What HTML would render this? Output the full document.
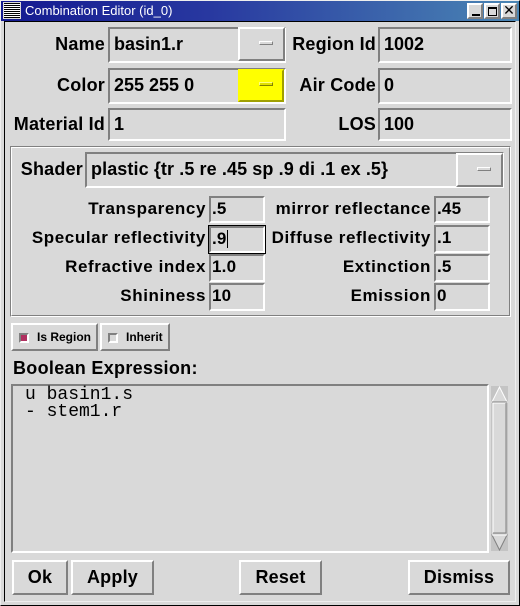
<!DOCTYPE html>
<html><head><style>
*{margin:0;padding:0;box-sizing:border-box}
body{width:520px;height:606px;background:#d9d9d9;position:relative;overflow:hidden;font-family:"Liberation Sans",sans-serif;font-weight:bold;color:#000}
.a{position:absolute}
.sunk{position:absolute;border:2px solid;border-color:#808080 #fff #fff #808080;background:#d9d9d9}
.rais{position:absolute;border:2px solid;border-color:#fff #808080 #808080 #fff;background:#d9d9d9}
.lbl{position:absolute;font-size:18px;text-align:right;white-space:nowrap;line-height:20px;letter-spacing:0.2px}
.val{position:absolute;font-size:18px;line-height:20px;white-space:nowrap;letter-spacing:0px}
.pl{position:absolute;font-size:17px;text-align:right;white-space:nowrap;line-height:20px;letter-spacing:0.6px}
.pv{position:absolute;font-size:17px;line-height:20px;letter-spacing:0.2px}
.ind{position:absolute;width:14px;height:4px;border:1px solid;border-color:#fff #808080 #808080 #fff;background:#d9d9d9}
.btn{position:absolute;border:2px solid;border-color:#fff #808080 #808080 #fff;font-size:18px;text-align:center;line-height:30px;background:#d9d9d9;letter-spacing:0.2px}
</style></head><body>
<div class="a" style="left:0;top:0;width:520px;height:606px;border:1px solid #000;border-color:#eee #000 #000 #eee"></div>
<div class="a" style="left:4px;top:21px;width:512px;height:581px;border:1px solid;border-color:#000 #eee #eee #000"></div>
<div class="a" style="left:1px;top:1px;width:518px;height:20px;background:linear-gradient(90deg,#141a90,#2838a0 40%,#4a86b4)"></div>
<div class="a" style="left:3px;top:2px;width:18px;height:17px;background:repeating-linear-gradient(#000 0 1px,#fff 1px 2px);border:1px solid #d9d9d9"></div>
<div class="a" style="left:25px;top:3px;color:#fff;font-weight:normal;font-size:13px;line-height:15px">Combination Editor (id_0)</div>
<div class="rais" style="left:467px;top:3px;width:16px;height:16px"><div class="a" style="left:3px;top:9px;width:8px;height:2px;background:#000"></div></div>
<div class="rais" style="left:484px;top:3px;width:16px;height:16px"><div class="a" style="left:2px;top:2px;width:9px;height:9px;border:1px solid #000;border-top-width:2px"></div></div>
<div class="rais" style="left:501px;top:3px;width:16px;height:16px;font-size:14px;font-weight:normal;line-height:11px;text-align:center">✕</div>

<div class="lbl" style="left:10px;top:34px;width:95px">Name</div>
<div class="sunk" style="left:108px;top:27px;width:178px;height:36px"></div>
<div class="val" style="left:114px;top:34px">basin1.r</div>
<div class="rais" style="left:238px;top:27px;width:47px;height:34px"><div class="ind" style="left:19px;top:12px"></div></div>
<div class="lbl" style="left:280px;top:34px;width:96px">Region Id</div>
<div class="sunk" style="left:378px;top:27px;width:134px;height:36px"></div>
<div class="val" style="left:384px;top:34px">1002</div>

<div class="lbl" style="left:10px;top:75px;width:95px">Color</div>
<div class="sunk" style="left:108px;top:68px;width:178px;height:36px"></div>
<div class="val" style="left:114px;top:75px">255 255 0</div>
<div class="a" style="left:238px;top:69px;width:46px;height:33px;background:#ffff00;border:2px solid;border-color:#ffff00 #a0a000 #a0a000 #ffff00"><div class="ind" style="left:19px;top:11px;background:#e0e000;border-color:#ffff80 #808000 #808000 #ffff80"></div></div>
<div class="lbl" style="left:280px;top:75px;width:96px">Air Code</div>
<div class="sunk" style="left:378px;top:68px;width:134px;height:36px"></div>
<div class="val" style="left:384px;top:75px">0</div>

<div class="lbl" style="left:5px;top:114px;width:100px">Material Id</div>
<div class="sunk" style="left:108px;top:108px;width:178px;height:33px"></div>
<div class="val" style="left:114px;top:114px">1</div>
<div class="lbl" style="left:280px;top:114px;width:96px">LOS</div>
<div class="sunk" style="left:378px;top:108px;width:134px;height:33px"></div>
<div class="val" style="left:384px;top:114px">100</div>

<div class="a" style="left:10px;top:146px;width:501px;height:171px;border:1px solid;border-color:#808080 #fff #fff #808080"></div>
<div class="a" style="left:11px;top:147px;width:499px;height:169px;border:1px solid;border-color:#fff #808080 #808080 #fff"></div>
<div class="lbl" style="left:12px;top:159px;width:71px">Shader</div>
<div class="sunk" style="left:85px;top:152px;width:419px;height:36px"></div>
<div class="val" style="left:91px;top:159px;letter-spacing:0.1px">plastic {tr .5 re .45 sp .9 di .1 ex .5}</div>
<div class="rais" style="left:456px;top:153px;width:47px;height:34px"><div class="ind" style="left:19px;top:12px"></div></div>

<div class="pl" style="left:10px;top:199px;width:196px">Transparency</div>
<div class="sunk" style="left:209px;top:196px;width:56px;height:27px"></div><div class="pv" style="left:212px;top:199px">.5</div>
<div class="pl" style="left:10px;top:228px;width:196px">Specular reflectivity</div>
<div class="a" style="left:208px;top:225px;width:58px;height:29px;border:1px solid #000"></div><div class="sunk" style="left:209px;top:226px;width:56px;height:27px"></div><div class="pv" style="left:212px;top:229px">.9</div><div class="a" style="left:227px;top:230px;width:1px;height:18px;background:#000"></div>
<div class="pl" style="left:10px;top:257px;width:196px">Refractive index</div>
<div class="sunk" style="left:209px;top:254px;width:56px;height:28px"></div><div class="pv" style="left:212px;top:257px">1.0</div>
<div class="pl" style="left:10px;top:286px;width:196px">Shininess</div>
<div class="sunk" style="left:209px;top:283px;width:56px;height:28px"></div><div class="pv" style="left:212px;top:286px">10</div>

<div class="pl" style="left:250px;top:199px;width:181px">mirror reflectance</div>
<div class="sunk" style="left:434px;top:196px;width:56px;height:27px"></div><div class="pv" style="left:437px;top:199px">.45</div>
<div class="pl" style="left:250px;top:228px;width:181px">Diffuse reflectivity</div>
<div class="sunk" style="left:434px;top:225px;width:56px;height:28px"></div><div class="pv" style="left:437px;top:228px">.1</div>
<div class="pl" style="left:250px;top:257px;width:181px">Extinction</div>
<div class="sunk" style="left:434px;top:254px;width:56px;height:28px"></div><div class="pv" style="left:437px;top:257px">.5</div>
<div class="pl" style="left:250px;top:286px;width:181px">Emission</div>
<div class="sunk" style="left:434px;top:283px;width:56px;height:28px"></div><div class="pv" style="left:437px;top:286px">0</div>

<div class="rais" style="left:11px;top:323px;width:87px;height:28px"><div class="a" style="left:6px;top:8px;width:10px;height:10px;background:#b03060;border:2px solid;border-color:#808080 #fff #fff #808080"></div><div class="a" style="left:24px;top:4px;font-size:12px;line-height:16px">Is Region</div></div>
<div class="rais" style="left:100px;top:323px;width:70px;height:28px"><div class="a" style="left:6px;top:8px;width:10px;height:10px;background:#d9d9d9;border:2px solid;border-color:#808080 #fff #fff #808080"></div><div class="a" style="left:24px;top:4px;font-size:12px;line-height:16px">Inherit</div></div>

<div class="a" style="left:13px;top:358px;font-size:18px;line-height:20px;letter-spacing:0.3px">Boolean Expression:</div>
<div class="sunk" style="left:11px;top:384px;width:478px;height:169px"></div>
<div class="a" style="left:25px;top:387px;font-family:'Liberation Mono',monospace;font-weight:normal;font-size:18px;line-height:17px;white-space:pre">u basin1.s
- stem1.r</div>
<div class="a" style="left:491px;top:386px;width:17px;height:165px;background:#c4c4c4"></div>
<svg class="a" style="left:491px;top:386px" width="17" height="165">
<polygon points="8.5,1 16,16 1,16" fill="#d9d9d9" stroke="#fff"/>
<polyline points="16,16 1,16" stroke="#808080" fill="none"/>
<rect x="2" y="17" width="13" height="130" fill="#d9d9d9" stroke="#fff"/>
<polyline points="15,17 15,147 2,147" stroke="#808080" fill="none"/>
<polygon points="1,149 16,149 8.5,164" fill="#d9d9d9" stroke="#808080"/>
<polyline points="1,149 16,149 " stroke="#fff" fill="none"/>
</svg>

<div class="btn" style="left:12px;top:560px;width:56px;height:35px">Ok</div>
<div class="btn" style="left:71px;top:560px;width:83px;height:35px">Apply</div>
<div class="btn" style="left:239px;top:560px;width:83px;height:35px">Reset</div>
<div class="btn" style="left:408px;top:560px;width:102px;height:35px">Dismiss</div>
</body></html>
